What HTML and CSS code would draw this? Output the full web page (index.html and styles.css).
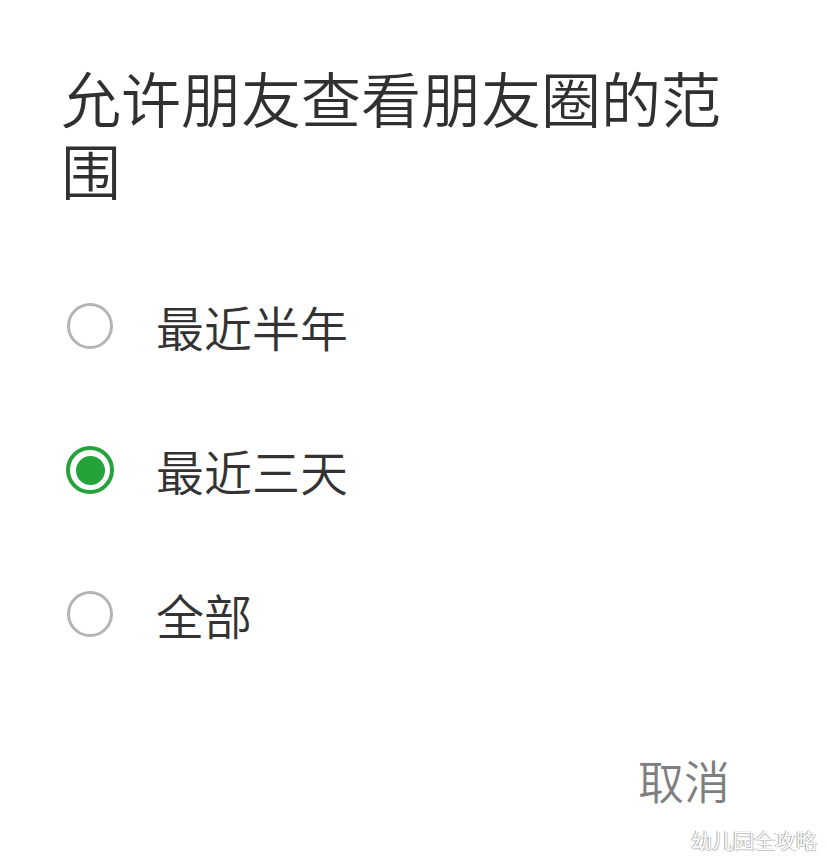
FILE: index.html
```html
<!DOCTYPE html>
<html lang="zh-CN">
<head>
<meta charset="utf-8">
<title>允许朋友查看朋友圈的范围</title>
<link rel="stylesheet" href="styles.css">
</head>
<body>
<div class="dialog">
  <h1 class="title">允许朋友查看朋友圈的范围</h1>
  <ul class="options">
    <li class="option"><span class="radio"></span><span class="label">最近半年</span></li>
    <li class="option"><span class="radio checked"></span><span class="label">最近三天</span></li>
    <li class="option"><span class="radio"></span><span class="label">全部</span></li>
  </ul>
  <div class="actions"><span class="cancel">取消</span></div>
  <div class="watermark">幼儿园全攻略</div>
</div>
</body>
</html>
```
FILE: styles.css
```css
html, body {
  margin: 0;
  padding: 0;
  background: #ffffff;
}
body {
  font-family: "Noto Sans CJK SC", "Noto Sans", sans-serif;
  font-weight: 350;
  width: 827px;
  height: 865px;
  overflow: hidden;
}
.dialog {
  position: relative;
  width: 827px;
  height: 865px;
  box-sizing: border-box;
  padding: 61px 0 0 61px;
}
.title {
  margin: 0;
  width: 670px;
  font-size: 60px;
  line-height: 72px;
  font-weight: 350;
  color: #303030;
}
.options {
  list-style: none;
  margin: 49px 0 0 0;
  padding: 0;
}
.option {
  height: 144px;
  display: flex;
  align-items: center;
}
.radio {
  box-sizing: border-box;
  width: 46px;
  height: 46px;
  margin-left: 6px;
  border: 3px solid #b4b4b4;
  border-radius: 50%;
  margin-right: 43px;
  display: flex;
  align-items: center;
  justify-content: center;
  flex-shrink: 0;
}
.radio.checked {
  width: 48px;
  height: 48px;
  margin-left: 5px;
  margin-right: 42px;
  border: 4px solid #23a33a;
}
.radio.checked::after {
  content: "";
  width: 29px;
  height: 29px;
  border-radius: 50%;
  background: #23a33a;
}
.label {
  font-size: 48px;
  line-height: 56px;
  color: #333333;
}
.actions {
  display: flex;
  justify-content: flex-end;
  margin-top: 65px;
  padding-right: 97px;
}
.cancel {
  font-size: 46px;
  line-height: 56px;
  color: #7f7f7f;
}
.watermark {
  position: absolute;
  right: 10px;
  top: 828px;
  font-size: 21px;
  line-height: 22px;
  color: #ffffff;
  text-shadow: -1px 0 0 #a8a8a8, 1px 1px 0 #c8c8c8;
}
```
